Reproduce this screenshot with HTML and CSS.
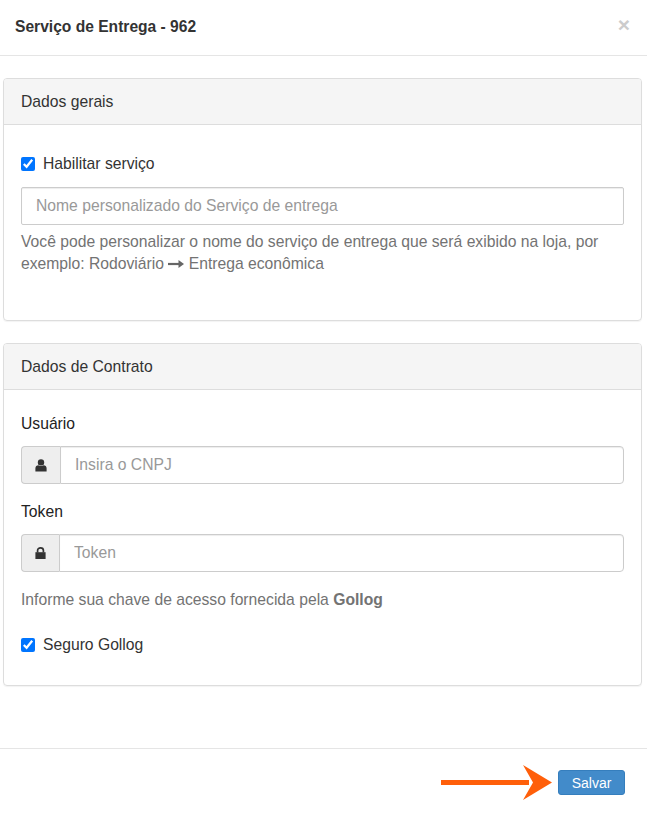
FILE: index.html
```html
<!DOCTYPE html>
<html lang="pt-BR">
<head>
  <meta charset="UTF-8" />
  <meta name="viewport" content="width=device-width, initial-scale=1.0"/>
  <title>Serviço de Entrega - 962</title>
  <link rel="stylesheet" href="styles.css">
</head>
<body>
  <div class="modal">

    <!-- Header -->
    <div class="modal-header">
      <h4>Serviço de Entrega - 962</h4>
      <span class="close">×</span>
    </div>

    <!-- Body -->
    <div class="modal-body">
      <div class="panel panel-general">
        <div class="panel-heading">Dados gerais</div>
        <div class="panel-body">
          <label class="check"><input type="checkbox" checked /> Habilitar serviço</label>
          <input class="form-control" type="text" placeholder="Nome personalizado do Serviço de entrega" />
          <p class="help">Você pode personalizar o nome do serviço de entrega que será exibido na loja, por exemplo: Rodoviário <svg class="arrow-inline" width="16" height="8" viewBox="0 0 16 8"><path d="M0 2.9h11V5.1H0z" fill="#666"/><path d="M10.5 0 16 4 10.5 8z" fill="#666"/></svg> Entrega econômica</p>
        </div>
      </div>

      <div class="panel panel-contract">
        <div class="panel-heading">Dados de Contrato</div>
        <div class="panel-body">
          <label class="field-label">Usuário</label>
          <div class="input-group">
            <span class="addon addon-user">
              <svg width="12" height="13" viewBox="0 0 12 13"><circle cx="6" cy="3.4" r="3.2" fill="#333"/><path d="M0.4 12.6V9.2C0.4 7.4 1.8 6.3 3.4 6.2 4.2 6.8 5 7.1 6 7.1s1.8-.3 2.6-.9c1.6.1 3 1.2 3 3v3.4z" fill="#333"/></svg>
            </span>
            <input class="form-control" type="text" placeholder="Insira o CNPJ" />
          </div>
          <label class="field-label">Token</label>
          <div class="input-group group-token">
            <span class="addon addon-lock">
              <svg width="11" height="12" viewBox="0 0 11 12"><path d="M0.4 5.2h10.2v6.8H.4z" fill="#333"/><path d="M2.6 5.5V3.4C2.6 1.8 3.8.9 5.5.9s2.9.9 2.9 2.5v2.1" fill="none" stroke="#333" stroke-width="1.7"/></svg>
            </span>
            <input class="form-control" type="text" placeholder="Token" />
          </div>
          <p class="help help-token">Informe sua chave de acesso fornecida pela <b>Gollog</b></p>
          <label class="check check-last"><input type="checkbox" checked /> Seguro Gollog</label>
        </div>
      </div>
    </div>

    <!-- Footer -->
    <div class="modal-footer">
      <button class="btn-primary" type="button">Salvar</button>
    </div>

    <!-- Annotation arrow over the screenshot -->
    <svg class="annotation" width="112" height="36" viewBox="0 0 112 36">
      <path d="M0 15H88V20H0z" fill="#ff5f0a"/>
      <path d="M82 0 L111 17.5 L82 35 L92 17.5z" fill="#ff5f0a"/>
    </svg>
  </div>
</body>
</html>
```

FILE: styles.css
```css
* {
  box-sizing: border-box;
}

body {
  margin: 0;
  font-family: 'Liberation Sans', Arial, sans-serif;
  font-size: 15.7px;
  line-height: 22px;
  color: #333;
  background-color: #fff;
}

.modal {
  position: relative;
  width: 647px;
  height: 813px;
  display: flex;
  flex-direction: column;
}

.modal-header {
  height: 56px;
  padding: 0 15px;
  display: flex;
  align-items: center;
  justify-content: space-between;
  border-bottom: 1px solid #e5e5e5;
}

.modal-header h4 {
  margin: 0 0 2px;
  font-size: 15.6px;
  font-weight: 700;
  color: #333;
}

.close {
  margin: 0 2px 6px 0;
  font-size: 21px;
  font-weight: 700;
  color: #ccc;
}

.modal-body {
  flex: 1;
  padding: 22px 5px 0 3px;
}

.panel {
  border: 1px solid #ddd;
  border-radius: 4px;
  box-shadow: 0 1px 1px rgba(0, 0, 0, 0.05);
}

.panel-general {
  height: 243px;
  margin-bottom: 22px;
}

.panel-contract {
  height: 343px;
}

.panel-heading {
  height: 46px;
  padding: 12px 17px;
  background-color: #f5f5f5;
  border-bottom: 1px solid #ddd;
  border-radius: 3px 3px 0 0;
}

.panel-body {
  padding: 0 17px;
}

.panel-general .panel-body {
  padding-top: 28px;
}

.panel-contract .panel-body {
  padding-top: 23px;
}

.check {
  display: flex;
  align-items: center;
  gap: 8px;
  height: 22px;
}

.check input {
  width: 14px;
  height: 14px;
  margin: 0;
  accent-color: #0075ff;
}

.form-control {
  display: block;
  width: 100%;
  height: 38px;
  padding: 6px 14px;
  font-family: inherit;
  font-size: 15.7px;
  color: #555;
  background-color: #fff;
  border: 1px solid #ccc;
  border-radius: 0 4px 4px 0;
  box-shadow: inset 0 1px 1px rgba(0, 0, 0, 0.075);
}

.form-control::placeholder {
  color: #999;
  opacity: 1;
}

.panel-general .form-control {
  margin-top: 12px;
  border-radius: 2px;
}

.help {
  margin: 6px 0 0;
  color: #737373;
}

.arrow-inline {
  vertical-align: 1px;
}

.field-label {
  display: block;
  height: 22px;
  margin-bottom: 11px;
  color: #222;
}

.input-group {
  display: flex;
  margin-bottom: 17px;
}

.addon {
  flex: none;
  width: 39px;
  display: flex;
  align-items: center;
  justify-content: center;
  background-color: #eee;
  border: 1px solid #ccc;
  border-right: 0;
  border-radius: 4px 0 0 4px;
}

.group-token .addon {
  width: 38px;
}

.group-token {
  margin-bottom: 0;
}

.help-token {
  margin-top: 17px;
}

.check-last {
  margin-top: 23px;
}

.modal-footer {
  height: 65px;
  padding: 21px 22px 0 0;
  display: flex;
  justify-content: flex-end;
  align-items: flex-start;
  border-top: 1px solid #e5e5e5;
}

.btn-primary {
  width: 67px;
  height: 25px;
  padding: 0;
  font-family: inherit;
  font-size: 14px;
  color: #fff;
  background-color: #428bca;
  border: 1px solid #357ebd;
  border-radius: 3px;
}

.annotation {
  position: absolute;
  left: 441px;
  top: 765px;
}
```
